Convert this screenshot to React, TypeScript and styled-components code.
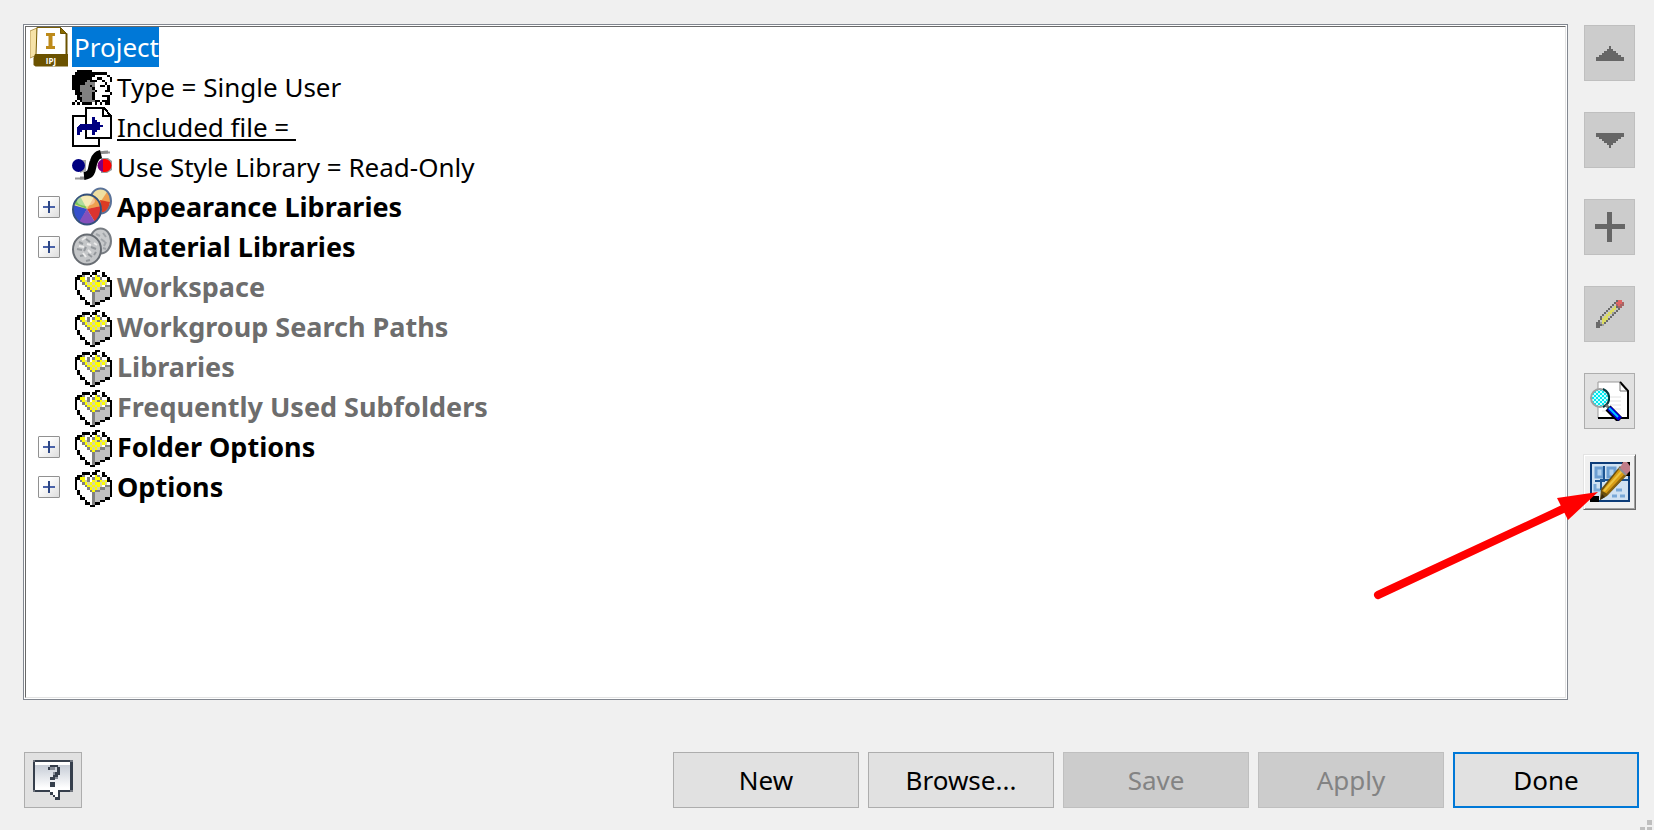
import React from 'react';
import styled, { createGlobalStyle, css } from 'styled-components';

const GlobalStyle = createGlobalStyle`
  *, *::before, *::after { box-sizing: border-box; }
  body { margin: 0; background: #f0f0f0; }
`;

const Dialog = styled.main`
  position: relative;
  display: flex;
  flex-direction: column;
  gap: 52px;
  min-height: 100vh;
  padding: 24px 15px 22px 23px;
  background: #f0f0f0;
  color: #000;
  font-family: 'Noto Sans', Tahoma, sans-serif;
  font-size: 26px;
`;

const Content = styled.div`
  flex: 1;
  display: flex;
  gap: 15px;
  padding-right: 3px;
`;

const TreePanel = styled.section`
  flex: 1;
  display: flex;
  min-width: 0;
  padding: 1px;
  border: 1px solid #828790;
  background: #fff;
`;

const Tree = styled.ul`
  flex: 1;
  margin: 0;
  padding: 0 0 0 4px;
  list-style: none;
  border: 1px solid;
  border-color: #696969 #e3e3e3 #e3e3e3 #696969;
`;

const Row = styled.li`
  display: grid;
  grid-template-columns: 42px 40px 1fr;
  align-items: center;
  height: 40px;
`;

const RootRow = styled(Row)`
  grid-template-columns: 42px 1fr;
`;

const labelTone = {
  plain: css`font-weight: 400; color: #000;`,
  strong: css`font-weight: 700; font-size: 27px; color: #000;`,
  muted: css`font-weight: 700; font-size: 27px; color: #6d6d6d;`,
};

const Label = styled.span<{ $tone: keyof typeof labelTone; $underlined?: boolean }>`
  grid-column: 3;
  padding-left: 5px;
  line-height: 40px;
  white-space: pre;
  ${({ $tone }) => labelTone[$tone]}
  span {
    ${({ $underlined }) =>
      $underlined &&
      css`
        text-decoration: underline;
        text-decoration-thickness: 2px;
        text-underline-offset: 2px;
        text-decoration-skip-ink: none;
      `}
  }
`;

const SelectedLabel = styled.span`
  justify-self: start;
  padding-left: 2px;
  line-height: 40px;
  background: #0078d7;
  color: #fff;
`;

const IconCell = styled.span`
  grid-column: 2;
  display: flex;
`;

const Toggle = styled.button`
  display: grid;
  place-items: center;
  width: 22px;
  height: 22px;
  margin-left: 8px;
  padding: 0;
  border: 1px solid #919191;
  border-radius: 1px;
  background: linear-gradient(135deg, #fff 30%, #dcdcdc);
`;

const face = {
  normal: css`background: #e1e1e1; border: 1px solid #adadad; color: #000;`,
  disabled: css`background: #ccc; border: 1px solid #bfbfbf; color: #838383;`,
  primary: css`background: #e1e1e1; border: 2px solid #0078d7; color: #000;`,
  raised: css`
    background: #f0f0f0;
    border: 1px solid;
    border-color: #e3e3e3 #696969 #696969 #e3e3e3;
    box-shadow: inset 1px 1px #fff, inset -1px -1px #a0a0a0;
  `,
};

const Button = styled.button<{ $face: keyof typeof face }>`
  display: grid;
  place-items: center;
  height: 56px;
  padding: 0;
  border-radius: 0;
  font: inherit;
  ${({ $face }) => face[$face]}
`;

const ToolButton = styled(Button)`
  width: 51px;
`;

const EditButton = styled(Button)`
  width: 53px;
`;

const HelpButton = styled(Button)`
  width: 58px;
`;

const CommandButton = styled(Button)`
  width: 186px;
`;

const Toolbar = styled.div`
  display: flex;
  flex-direction: column;
  align-items: center;
  width: 53px;
  padding-top: 1px;
`;

const ToolGroup = styled.div`
  display: flex;
  flex-direction: column;
  gap: 31px;
  margin-bottom: 25px;
`;

const EditSlot = styled.div`
  position: relative;
`;

const Pointer = styled.svg`
  position: absolute;
  right: 37px;
  top: 30px;
  pointer-events: none;
`;

const Footer = styled.footer`
  display: flex;
  justify-content: space-between;
  padding-left: 1px;
`;

const Commands = styled.div`
  display: flex;
  gap: 9px;
`;

const Grip = styled.svg`
  position: absolute;
  right: 2px;
  bottom: 0;
`;

const palette: Record<string, string> = {
  K: '#000', G: '#808080', C: '#c0c0c0', W: '#fff', Y: '#ffff00', V: '#d8d89a',
  D: '#6a6a6a', R: '#e06464', P: '#a86464', L: '#dcdc64', E: '#a0a0a0', S: '#c4c4c4',
};

/* Draws an icon from rows of palette letters, one letter per pixel. */
function Sprite({ rows, size }: { rows: string[]; size: number }) {
  const n = rows[0].length;
  return (
    <svg width={size} height={size} viewBox={`0 0 ${n} ${n}`} shapeRendering="crispEdges" aria-hidden="true">
      {rows.flatMap((row, y) =>
        row.split('').map((c, x) =>
          palette[c] ? <rect key={`${x}-${y}`} x={x} y={y} width="1" height="1" fill={palette[c]} /> : null,
        ),
      )}
    </svg>
  );
}

const usersRows = [
  '................',
  '..KKKKKK........',
  '.KKKKKKKKKKKKK..',
  'KKKKKKKKKWWWWWK.',
  'KKKKKKKKWWKKWWWK',
  'KKKKKKGKKKWWKWWK',
  'KKKKKGGGGWWWWKW.',
  'KKKGGGGKGWWKKWK.',
  'KKKGGGGGKWWWWWK.',
  '.KKGGGGGGKWWWKK.',
  '.KKKGGGGKWWWWWWK',
  '..KGGGGGKWWWKKK.',
  '..KKGGGGKWWWWWK.',
  '.K.KGGGGGKKWKKK.',
  'K.K.KKKK.K.K.KK.',
  '................',
];

const basketRows = [
  '................',
  '.........KK.....',
  '....KKK.KK..K...',
  '..KKGWWKWYGWKK..',
  '.KKYYWGWGYYGWWK.',
  '.KWGYVGWYVGYVYKK',
  '.KWWGYVYVYYVYVWK',
  '.KWWWGYVYVYVWGGK',
  '.KWWWWGYVYVGGCCK',
  '..KWWWWGYGGCCCCK',
  '..KWWWWWGCCCCCCK',
  '...KWWWWGCCCCCCK',
  '...KKWWWGCCCCKK.',
  '.....KWWGCCKK...',
  '.....KKWGKK.....',
  '.......KK.......',
];

const pencilRows = [
  '..........DRR.',
  '.........DRRRP',
  '........DSPRPP',
  '.......DSLDPP.',
  '......DSLLSD..',
  '.....DSLLSD...',
  '....DSLLED....',
  '...DSLLSD.....',
  '..DSLLSD......',
  '..DLLLD.......',
  '.DSLLD........',
  'DDELD.........',
  'DDDE..........',
  'DD............',
];

function ProjectIcon() {
  return (
    <svg width="38" height="40" viewBox="0 0 38 40" aria-hidden="true">
      <path d="M7 1 0 4v27l7-3z" fill="#f6e3a8" stroke="#b79a55" />
      <path d="M7 .5h23.500l6 6V28H6z" fill="#fff" stroke="#7a5f06" />
      <path d="M30.500.5v6h6z" fill="#8a6a00" stroke="#6b5200" />
      <path d="M5 27h33v12.500H5.500L3.500 38v-7z" fill="#6b5200" />
      <path d="M36.500 6.500V39" stroke="#6b5200" strokeWidth="2" />
      <path d="M16 6h9v3h-2.500v10H25v3h-9v-3h2.500V9H16z" fill="#bd8a1a" />
      <text x="21" y="37" textAnchor="middle" fontFamily="Open Sans, sans-serif" fontWeight="700" fontSize="8" fill="#fff">IPJ</text>
    </svg>
  );
}

function IncludedFileIcon() {
  return (
    <svg width="40" height="40" viewBox="0 0 40 40" shapeRendering="crispEdges" aria-hidden="true">
      <rect x="1" y="9" width="26" height="30" fill="#fff" stroke="#000" strokeWidth="2" />
      <path d="M14 1h18l7 8v22H14z" fill="#fff" stroke="#000" strokeWidth="2" />
      <path d="M31 1v8h8" fill="none" stroke="#000" strokeWidth="2" />
      <path d="M5 28v-8l3-3h12v-7h3v3h2v2h3v3h3v2h-3v3h-3v2h-2v3h-3v-5H10v2H8v3z" fill="#000080" />
    </svg>
  );
}

function StyleIcon() {
  return (
    <svg width="40" height="40" viewBox="0 0 40 40" aria-hidden="true">
      <path d="M9 13h5v11l-6 2z" fill="#aaa" />
      <circle cx="6.500" cy="18.500" r="6.500" fill="#000080" />
      <path d="M29 11h7l4 3v9l-5 3h-6z" fill="#999" />
      <path d="M32 12a6.500 6.500 0 0 0 0 13z" fill="#800080" />
      <path d="M31 12h2a6.500 6.500 0 0 1 0 13h-2z" fill="#f00" />
      <path d="M3 31.500h11M27 5.500h11" stroke="#999" strokeWidth="2" />
      <path d="M8 31c14 1 10-10 13-17 2-6 5-9 15-9" fill="none" stroke="#8c8c8c" strokeWidth="3" />
      <path d="M12 29c10-1 7-9 10-15 1-4 3-6 7-7" fill="none" stroke="#000" strokeWidth="8" />
    </svg>
  );
}

function AppearanceIcon() {
  return (
    <svg width="40" height="40" viewBox="0 0 40 40" aria-hidden="true">
      <ellipse cx="28.500" cy="14" rx="10.500" ry="12.500" fill="#f0dfa0" />
      <path d="m29 14 6-9a13 13 0 0 1 3 10z" fill="#eea050" />
      <path d="m28 13 10 2q-1 9-8 11z" fill="#dc3c24" />
      <ellipse cx="28.500" cy="14" rx="10.500" ry="12.500" fill="none" stroke="#5a7298" strokeWidth="2" />
      <ellipse cx="15" cy="22.500" rx="14" ry="15" fill="#f0dc88" />
      <path d="M15 22 2 17q2-6 6-8z" fill="#78c45a" />
      <path d="m15 22 7-12q6 4 7 9z" fill="#eea050" />
      <path d="m15 22 14-3v5q-1 6-6 11z" fill="#dc3430" />
      <path d="M15 22 1 18v6q1 6 7 11z" fill="#3450cc" />
      <path d="m15 22 8 13q-8 5-16 0z" fill="#8450bc" />
      <ellipse cx="15" cy="22.500" rx="14" ry="15" fill="none" stroke="#34507c" strokeWidth="2" />
      <ellipse cx="14" cy="14" rx="9" ry="5" fill="#fff" opacity=".4" />
    </svg>
  );
}

function MaterialIcon() {
  return (
    <svg width="40" height="40" viewBox="0 0 40 40" aria-hidden="true">
      <ellipse cx="28.500" cy="14" rx="10.500" ry="12.500" fill="#c8cacc" stroke="#777c82" strokeWidth="2" />
      <path d="m24 7 4 2M31 6l3 4M29 12l4 3M34 15l-2 4M31 21l3 1" stroke="#a2a6aa" strokeWidth="2" />
      <ellipse cx="15" cy="22.500" rx="14" ry="15" fill="#c4c6c8" stroke="#676c72" strokeWidth="2" />
      <path d="m7 15 4 2M14 12l4 3M5 22l5 1M14 20l-2 4M19 20l5 2M8 29l5-1M16 27l4 3M22 28l2-3M14 34l4-1" stroke="#94989c" strokeWidth="2" />
      <path d="m10 13 4-3M7 19l5 1M15 17l4 1M16 23l3 3M11 26l3 4M22 16l3 2" stroke="#ececec" strokeWidth="2" />
    </svg>
  );
}

const UsersIcon = () => <Sprite rows={usersRows} size={40} />;
const BasketIcon = () => <Sprite rows={basketRows} size={40} />;

function ToggleGlyph() {
  return (
    <svg width="12" height="12" viewBox="0 0 12 12" shapeRendering="crispEdges" aria-hidden="true">
      <path d="M0 5h12v2H0z" fill="#4a62a8" />
      <path d="M5 0h2v12H5z" fill="#2c4686" />
    </svg>
  );
}

function TriangleIcon({ down }: { down?: boolean }) {
  const steps = [2, 6, 12, 16, 22, 28];
  return (
    <svg width="28" height="15" viewBox="0 0 28 15" shapeRendering="crispEdges" aria-hidden="true">
      {steps.map((w, i) => {
        const y = i === 0 ? 0 : i * 2 + 1;
        const h = i === 0 ? 3 : i === 5 ? 4 : 2;
        return <rect key={w} x={14 - w / 2} y={down ? 15 - y - h : y} width={w} height={h} fill="#666" />;
      })}
    </svg>
  );
}

function PlusIcon() {
  return (
    <svg width="30" height="30" viewBox="0 0 30 30" aria-hidden="true">
      <path d="M12 0h5v12h13v5H17v13h-5V17H0v-5h12z" fill="#666" />
    </svg>
  );
}

function SearchPageIcon() {
  return (
    <svg width="40" height="40" viewBox="0 0 40 40" aria-hidden="true">
      <defs>
        <pattern id="lens" width="4" height="4" patternUnits="userSpaceOnUse">
          <path d="M0 0h4v4H0z" fill="#00e8f0" />
          <path d="M0 0h2v2H0zM2 2h2v2H2z" fill="#c8ffff" />
        </pattern>
      </defs>
      <path d="M8 1h22l8 9v27H8z" fill="#fff" />
      <path d="M8 37V1h22" fill="none" stroke="#999" />
      <path d="m30 1 8 9v27H8" fill="none" stroke="#000" strokeWidth="2" />
      <path d="M30 2v8h7" fill="none" stroke="#777" />
      <path d="M20 16h11M20 20h11M20 24h11M24 28h7M12 30h6" stroke="#e2e2e2" />
      <circle cx="10" cy="17" r="9" fill="url(#lens)" stroke="#a0a0a0" strokeWidth="2" />
      <path d="M13 8q7 3 6 11-1 5-6 7" fill="none" stroke="#003c40" strokeWidth="2" />
      <path d="m16 24 4 4" stroke="#777" strokeWidth="3" />
      <path d="m18 27 12 12" stroke="#000" strokeWidth="7" />
      <path d="m19 27 11 11" stroke="#0000e0" strokeWidth="5" />
      <path d="m19 27 9 9" stroke="#00c8ff" strokeWidth="2" />
    </svg>
  );
}

function EditProjectIcon() {
  return (
    <svg width="40" height="40" viewBox="0 0 40 40" aria-hidden="true">
      <path d="M0 0h40v40H0z" fill="#0c3c78" />
      <path d="M2 2h36v36H2z" fill="#d0e2f2" />
      <path d="M32 0h8v14h-4zM0 34h9v6H0z" fill="#000" />
      <path d="M6 6h7v9H6zM18 6h7v9h-7z" fill="#b0d0ee" stroke="#6d9fd2" strokeWidth="3" />
      <path d="M5 22v6h6M26 28h6M22 34h5M30 34h5" fill="none" stroke="#79a9d8" strokeWidth="3" />
      <path d="M14 4v15H5M11 28V18h27" fill="none" stroke="#1c5492" strokeWidth="2" />
      <path d="m10 38 1-11L30 4l8 8-21 22z" fill="#6a5010" />
      <path d="m12 29 18-23 6 6-18 20z" fill="#d89c14" />
      <path d="m14 29 18-20" stroke="#ecc440" strokeWidth="2" />
      <path d="m17 32 18-19" stroke="#8c640c" strokeWidth="2" />
      <path d="m30 6 3-6h4l3 4v5l-4 4z" fill="#c07c88" />
      <path d="m29 6 7 7" stroke="#8e8e94" strokeWidth="2" />
      <path d="m10 38 2-6 3 3z" fill="#3a2c10" />
    </svg>
  );
}

function HelpIcon() {
  return (
    <svg width="40" height="40" viewBox="0 0 40 40" shapeRendering="crispEdges" aria-hidden="true">
      <defs>
        <linearGradient id="bubble" x1="0" y1="0" x2="0" y2="1">
          <stop offset="0" stopColor="#c6ccd6" />
          <stop offset="1" stopColor="#fff" />
        </linearGradient>
      </defs>
      <path d="M0 0h40v32H0z" fill="#363f4c" />
      <path d="M2 2h35v28H2z" fill="#fff" />
      <path d="M2 5h35v23H2z" fill="url(#bubble)" />
      <path d="M0 0h2v2H0zM37 0h3v2h-3zM0 30h2v2H0zM37 30h3v2h-3z" fill="#70757e" />
      <path d="M17 30h10v10h-5v-3h-2v-2h-3z" fill="#363f4c" />
      <path d="M17 30h8v7h-3v-2h-2v-3h-3z" fill="#fff" />
      <path d="M17 5h8v2h2v8h-2v2h-3v3h-5v-3h3v-3h2v-2h2V7h-7v3h-2V7h2zM17 22h5v5h-5z" fill="#363f4c" />
      <path d="M17 7h5v3h-5zM20 12h2v3h-2zM22 17h3v2h-3z" fill="#868c97" />
    </svg>
  );
}

interface Item {
  label: string;
  icon: React.ComponentType;
  tone: keyof typeof labelTone;
  expandable?: boolean;
  underlined?: boolean;
}

const items: Item[] = [
  { label: 'Type = Single User', icon: UsersIcon, tone: 'plain' },
  { label: 'Included file = ', icon: IncludedFileIcon, tone: 'plain', underlined: true },
  { label: 'Use Style Library = Read-Only', icon: StyleIcon, tone: 'plain' },
  { label: 'Appearance Libraries', icon: AppearanceIcon, tone: 'strong', expandable: true },
  { label: 'Material Libraries', icon: MaterialIcon, tone: 'strong', expandable: true },
  { label: 'Workspace', icon: BasketIcon, tone: 'muted' },
  { label: 'Workgroup Search Paths', icon: BasketIcon, tone: 'muted' },
  { label: 'Libraries', icon: BasketIcon, tone: 'muted' },
  { label: 'Frequently Used Subfolders', icon: BasketIcon, tone: 'muted' },
  { label: 'Folder Options', icon: BasketIcon, tone: 'strong', expandable: true },
  { label: 'Options', icon: BasketIcon, tone: 'strong', expandable: true },
];

export default function App() {
  return (
    <>
      <GlobalStyle />
      <Dialog>
        <Content>
          <TreePanel aria-label="Project settings">
            <Tree>
              <RootRow>
                <ProjectIcon />
                <SelectedLabel>Project</SelectedLabel>
              </RootRow>
              {items.map(({ label, icon: Icon, tone, expandable, underlined }) => (
                <Row key={label}>
                  {expandable && (
                    <Toggle type="button" aria-label={`Expand ${label}`}>
                      <ToggleGlyph />
                    </Toggle>
                  )}
                  <IconCell><Icon /></IconCell>
                  <Label $tone={tone} $underlined={underlined}><span>{label}</span></Label>
                </Row>
              ))}
            </Tree>
          </TreePanel>
          <Toolbar>
            <ToolGroup>
              <ToolButton type="button" $face="disabled" disabled aria-label="Move up"><TriangleIcon /></ToolButton>
              <ToolButton type="button" $face="disabled" disabled aria-label="Move down"><TriangleIcon down /></ToolButton>
              <ToolButton type="button" $face="disabled" disabled aria-label="Add"><PlusIcon /></ToolButton>
              <ToolButton type="button" $face="disabled" disabled aria-label="Edit"><Sprite rows={pencilRows} size={28} /></ToolButton>
              <ToolButton type="button" $face="normal" aria-label="Find duplicates"><SearchPageIcon /></ToolButton>
            </ToolGroup>
            <EditSlot>
              <EditButton type="button" $face="raised" aria-label="Configure"><EditProjectIcon /></EditButton>
              <Pointer width="226" height="120" viewBox="0 0 226 120" aria-hidden="true">
                <path d="M5 111 192 24" stroke="#f00" strokeWidth="8" strokeLinecap="round" />
                <path d="m225 8-41 6 11 22z" fill="#f00" />
              </Pointer>
            </EditSlot>
          </Toolbar>
        </Content>
        <Footer>
          <HelpButton type="button" $face="normal" aria-label="Help"><HelpIcon /></HelpButton>
          <Commands>
            <CommandButton type="button" $face="normal">New</CommandButton>
            <CommandButton type="button" $face="normal">Browse...</CommandButton>
            <CommandButton type="button" $face="disabled" disabled>Save</CommandButton>
            <CommandButton type="button" $face="disabled" disabled>Apply</CommandButton>
            <CommandButton type="button" $face="primary">Done</CommandButton>
          </Commands>
        </Footer>
        <Grip width="12" height="10" viewBox="0 0 12 10" aria-hidden="true">
          <path d="M7 0h5v5H7zM0 7h5v3H0zM7 7h5v3H7z" fill="#bfbfbf" />
        </Grip>
      </Dialog>
    </>
  );
}
